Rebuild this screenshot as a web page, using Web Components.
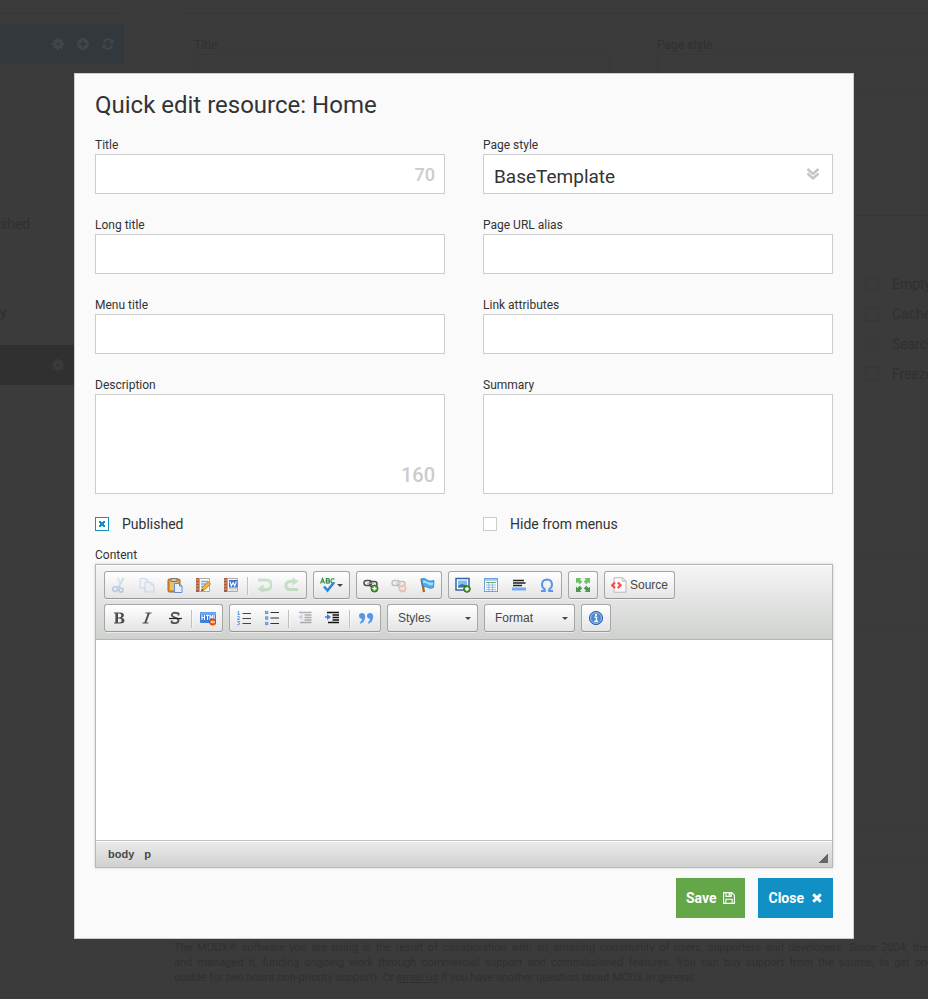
<!DOCTYPE html>
<html lang="en">
<head>
<meta charset="utf-8">
<title>Quick edit resource: Home</title>
<style>
  html, body { margin: 0; height: 100%; }
  body {
    background: #3b3b3b;
    color: #333;
    font-family: Roboto, "Liberation Sans", sans-serif;
    overflow: hidden;
  }
</style>
</head>
<body>
<dim-page></dim-page>
<modal-window heading="Quick edit resource: Home">
  <form-grid>
    <form-field label="Title" counter="70"></form-field>
    <form-field label="Page style" type="select" value="BaseTemplate"></form-field>
    <form-field label="Long title"></form-field>
    <form-field label="Page URL alias"></form-field>
    <form-field label="Menu title"></form-field>
    <form-field label="Link attributes"></form-field>
    <form-field label="Description" type="textarea" counter="160"></form-field>
    <form-field label="Summary" type="textarea"></form-field>
    <check-field label="Published" checked></check-field>
    <check-field label="Hide from menus"></check-field>
  </form-grid>
  <rich-editor label="Content"></rich-editor>
  <action-button slot="actions" label="Save" icon="floppy" tone="save"></action-button>
  <action-button slot="actions" label="Close" icon="times" tone="close"></action-button>
</modal-window>

<script>
const ICONS = {
  cut: '<g fill="none"><path d="M12.6 1 7.8 9.6" stroke="#6f94b8" stroke-width="1.8"/><path d="M7 .8 9.6 9" stroke="#9db6cf" stroke-width="1.8"/><circle cx="4.2" cy="12" r="2.4" stroke="#4d86c4" stroke-width="1.8"/><circle cx="10" cy="13.2" r="2" stroke="#4d86c4" stroke-width="1.8"/><path d="m6 10.8 2-1.4 1.4 2" stroke="#4d86c4" stroke-width="1.4"/></g>',
  copy: '<g stroke="#7c9bc9" fill="#e6eefb"><path d="M1 1.5h6l2.5 2.5v7H1z"/><path d="M7 1.5V4h2.5" fill="none"/><path d="M6 5.5h6L15 8v7H6z"/><path d="M12 5.5V8h3" fill="none"/></g>',
  paste: '<rect x="1" y="2" width="12" height="13" rx="1.3" fill="#d9952f" stroke="#a3671a"/><path d="M3 4h8v9H3z" fill="#efbe6b"/><path d="M4 1.5h6v3H4z" fill="#c8c8c8" stroke="#777"/><path d="M7.5 6.5h5l2.5 2.5v6.500h-7.500z" fill="#e4effd" stroke="#5e8fd0"/><path d="M12.500 6.500V9H15" fill="none" stroke="#5e8fd0"/>',
  template: '<path d="M1 1h3.500v14H1z" fill="#a65b43"/><path d="M1 3h3M1 6h3M1 9h3M1 12h3" stroke="#d9a08a"/><path d="M4.500 1.500h10v13h-10z" fill="#fafafa" stroke="#aaa"/><path d="M6 4.500h7M6 7h7M6 9.500h4" stroke="#8aa4d8" stroke-width="1.300"/><path d="m6.500 14 .8-3.400 6-6 2.300 2.300-6 6z" fill="#f5b431" stroke="#bd7517" stroke-width=".8"/><path d="m6.500 14 .5-2 1.500 1.500z" fill="#444"/>',
  word: '<path d="M1 1h3.500v14H1z" fill="#a65b43"/><path d="M1 3h3M1 6h3M1 9h3M1 12h3" stroke="#d9a08a"/><path d="M4.500 1.500h10v13h-10z" fill="#fafafa" stroke="#aaa"/><path d="M6 11.500h8M6 13h8" stroke="#bbb" stroke-width=".8"/><path d="M6 3h8.500v7.500H6z" fill="#3d6fd0"/><path d="M7 4.500 8.400 9l1.800-3.500L11.700 9l1.700-4.500" fill="none" stroke="#fff" stroke-width="1.100"/>',
  undo: '<path d="M2 3h8.500a4.200 4.200 0 0 1 0 9.700H6" fill="none" stroke="#62b562" stroke-width="3"/><path d="M7.500 7.500v8.300L1.500 12z" fill="#62b562"/>',
  redo: '<path d="M14 12.500H6a3.800 3.800 0 0 1 0-8.200h4" fill="none" stroke="#62b562" stroke-width="3.200"/><path d="M8.500.2v8.300l6-4.200z" fill="#62b562"/>',
  spell: '<g fill="none" stroke="#2f8a3c" stroke-width="1.100"><path d="M.6 6.500 2.600 1.500l2 5M1.300 5h2.600M6.300 6V1.600h1.800q1.300.1 1.300 1.100T8.100 3.900H6.300h2q1.400.1 1.400 1.200T8.300 6.100zM14.500 2.300q-3.200-1.800-3.500 1.600.3 3.500 3.500 1.600"/></g><path d="m4 9.500 3.500 4 6.500-8" fill="none" stroke="#2f86dc" stroke-width="2.600"/>',
  link: '<g fill="none" stroke="#4d4d4d" stroke-width="1.500"><rect x="1" y="3.500" width="7.500" height="5" rx="2.500"/><rect x="6.500" y="4.500" width="7.500" height="5" rx="2.500"/></g><path d="M4 6.200h7" stroke="#aaa"/><circle cx="11.500" cy="11.500" r="3.500" fill="#4a9c2c" stroke="#2e701a"/><path d="M11.500 9.500v4M9.500 11.500h4" stroke="#fff" stroke-width="1.400"/>',
  unlink: '<g fill="none" stroke="#4d4d4d" stroke-width="1.500"><rect x="1" y="3.500" width="7.500" height="5" rx="2.500"/><rect x="6.500" y="4.500" width="7.500" height="5" rx="2.500"/></g><path d="M4 6.200h7" stroke="#aaa"/><circle cx="11.500" cy="11.500" r="3.500" fill="#ef7a33" stroke="#c85512"/><path d="M9.500 11.500h4" stroke="#fff" stroke-width="1.500"/>',
  anchor: '<path d="m2.500 2 2.500 13" stroke="#a0641c" stroke-width="2.200"/><path d="M2 2q3-1.500 5.500.500T12 4l3-.5-.5 7q-2.500 1.500-5 .2T4.500 9.500z" fill="#49b1f3" stroke="#2a81cd" stroke-width=".8"/><path d="M4 4q2-1 4 .7T14 5.500v2Q11 9 8.500 7T4.500 6.500z" fill="#a9e0ff"/>',
  image: '<rect x="1" y="1.500" width="13" height="11.500" fill="#fff" stroke="#3465a8" stroke-width="1.500"/><path d="M3 3.500h9v7H3z" fill="#82bdf0"/><path d="M3 10.500V9l4-2 5 1.500v2z" fill="#3d6f9f"/><circle cx="12" cy="12" r="3.300" fill="#4a9c2c" stroke="#2e701a"/><path d="M12 10v4M10 12h4" stroke="#fff" stroke-width="1.400"/>',
  table: '<rect x="1.500" y="1.500" width="13" height="13" fill="#fff" stroke="#6d9ed8"/><path d="M2 2h12v2H2z" fill="#a8c9f0"/><path d="M3 5.500h10" stroke="#76a86a"/><path d="M3 8h10M3 10.300h10M3 12.600h10M5.800 6v8M9.500 6v8" stroke="#8bb2df" stroke-width=".9"/>',
  hr: '<path d="M2 3.500h11M2 6h12.500M2 8.500h9" stroke="#222" stroke-width="1.300"/><path d="M1 10.500h14v3H1z" fill="#79a8ec"/>',
  omega: '<path d="M2 14h3.800v-1.700Q3 10.500 3 7.500 3.200 2.600 8 2.500q4.800.1 5 5 0 3-2.800 4.800V14H14" fill="none" stroke="#5b94e4" stroke-width="2"/>',
  maximize: '<g fill="#6cc065"><path d="M1 1h5.500L5 2.500 7.200 4.700 4.700 7.200 2.500 5 1 6.500zM15 1v5.500L13.500 5l-2.200 2.200-2.500-2.500L11 2.500 9.500 1z"/></g><g fill="#4b9a4e"><path d="M1 15V9.500L2.500 11l2.200-2.200 2.500 2.500L5 13.500 6.500 15zM15 15H9.500l1.500-1.500-2.200-2.200 2.500-2.500L13.500 11 15 9.500z"/></g>',
  source: '<path d="M3 .8h8.500l3.500 3.200v11.200H3z" fill="#fbfbfb" stroke="#b5b5b5"/><path d="M11.300 1v3.300h3.400" fill="#e6e6e6" stroke="#b5b5b5" stroke-width=".8"/><path d="M4 5.500 1.200 8.300 4 11M6.800 5.500l2.800 2.800L6.800 11" fill="none" stroke="#ec4f46" stroke-width="2.200"/>',
  bold: '<path fill="#4d4d4d" fill-rule="evenodd" d="M3 2.500h6.200q3.700.1 3.700 2.900 0 1.900-2.200 2.400 2.800.5 2.800 2.800 0 2.900-4.200 2.900H3v-.8l1.400-.4V3.700L3 3.300zm4 1v3.900h1.300q2-.1 2-2t-2-1.900zm0 4.900v4.100h1.500q2.200-.1 2.200-2.100T8.500 8.400z"/>',
  italic: '<path d="M6.500 3h6M3.500 13h6" stroke="#4d4d4d" stroke-width="1.100"/><path d="M9.900 3 6.200 13" stroke="#4d4d4d" stroke-width="2"/>',
  strike: '<path d="M11.500 5.500V3.500Q5 1.500 4.800 5q.2 1.800 3.200 2.600 3.600.9 3.600 2.900Q11 14.300 4.700 12.500v-2" fill="none" stroke="#555" stroke-width="1.900"/><path d="M2 8.500h13" stroke="#222" stroke-width="1.200"/>',
  html: '<rect x="0" y="2" width="16" height="11" rx="1" fill="#3d7fdb"/><path d="M0 3q0-1 1-1h14q1 0 1 1v2H0z" fill="#6ba4ef"/><path d="M2 5v5M4.500 5v5M2 7.500h2.500M6 5.500h3M7.500 5.500V10M10 10V5l1.300 3L12.700 5v5M14.200 5v4.500" fill="none" stroke="#fff"/><circle cx="12.700" cy="12" r="3.200" fill="#f0661b" stroke="#c2440a" stroke-width=".8"/><path d="M10.800 12h3.800" stroke="#fff" stroke-width="1.400"/>',
  ol: '<path d="M6.500 3.500H15M6.500 8.500H15M6.500 13.500H15" stroke="#444" stroke-width="1.200"/><path d="M1.500 2 2.600 1.400V4.500M1.500 4.500h2.300M1.300 6.800q2.400-1.200 2.200.5L1.400 9.500h2.500M1.300 11.500h2.400L2.500 13q1.300 0 1.200 1t-2.500.8" fill="none" stroke="#5c96e8"/>',
  ul: '<path d="M6.500 2.500H15M6.500 8H15M6.500 13.500H15" stroke="#333" stroke-width="1.200"/><g fill="#8ab4f0" stroke="#5c90df" stroke-width=".8"><rect x="1.500" y="1.300" width="2.400" height="2.400"/><rect x="1.500" y="6.800" width="2.400" height="2.400"/><rect x="1.500" y="12.300" width="2.400" height="2.400"/></g>',
  outdent: '<path d="M2 2.500h12.500M7.500 5h7M7.500 7.500h7M7.500 10h7M3 12.500h11.500" stroke="#111" stroke-width="1.500"/><path d="M5.500 4 1.500 7l4 3z" fill="#4b8be6"/>',
  indent: '<path d="M2 2.500h12M7.500 5h6.500M7.500 7.500h6.500M7.500 10h6.500M3 12.500h11" stroke="#111" stroke-width="1.400"/><path d="m2 4 4 3-4 3zM0 6.300h3v1.500H0z" fill="#3d80e0"/>',
  quote: '<path fill="#5796ec" d="M1 5.800Q1.100 3.200 4 3.100q3.200.2 3.200 4Q6.700 12.500 2.500 13.800l-.7-1.100q2-1.500 2.200-4-2.900 0-3-2.900zM9 5.800q.1-2.600 3-2.700 3.200.2 3.200 4-.5 5.400-4.700 6.700l-.7-1.100q2-1.500 2.200-4-2.900 0-3-2.900z"/>',
  info: '<circle cx="8" cy="8" r="6.600" fill="#4f87cd" stroke="#2f5fa8"/><circle cx="8" cy="8" r="5.400" fill="none" stroke="#9bc0ec"/><circle cx="8" cy="4.900" r="1.100" fill="#fff"/><path d="M6.500 7.200h2v4M6.300 11.300h3.500" fill="none" stroke="#fff" stroke-width="1.400"/>',
  chevrons: '<path d="m2.500 3 5.500 5 5.500-5M2.500 7.500l5.500 5 5.500-5" fill="none" stroke="currentColor" stroke-width="2.400"/>',
  floppy: '<path d="M.8.8h11L15.200 4.200v11H.8z" fill="none" stroke="currentColor" stroke-width="1.500"/><path d="M4 1v4.800h7V1M3.800 15V9.700h8.400V15" fill="none" stroke="currentColor" stroke-width="1.400"/><path d="M7.500 1h2.500v4H7.500z" fill="currentColor"/>',
  times: '<path d="m3 3 10 10M13 3 3 13" fill="none" stroke="currentColor" stroke-width="4"/>',
  gear: '<circle cx="8" cy="8" r="4" fill="none" stroke="currentColor" stroke-width="4"/><path d="M8 0v3M8 13v3M0 8h3M13 8h3M2.300 2.300l2 2M11.700 11.700l2 2M13.700 2.300l-2 2M4.300 11.700l-2 2" stroke="currentColor" stroke-width="3.200"/>',
  plus: '<path fill="currentColor" fill-rule="evenodd" d="M8 0a8 8 0 1 0 0 16A8 8 0 0 0 8 0zM6.700 3.500h2.600v3.200h3.200v2.600H9.300v3.200H6.700V9.300H3.500V6.700h3.200z"/>',
  refresh: '<path d="M2 6.500Q4 1.500 8.500 1.700q3 .1 5 2.500M14 9.500Q12 14.500 7.500 14.300q-3-.1-5-2.500" fill="none" stroke="currentColor" stroke-width="2.500"/><path d="M15.500 1v6h-6zM.5 15V9h6z" fill="currentColor"/>'
};

const svg = name => `<svg viewBox="0 0 16 16" aria-hidden="true">${ICONS[name] || ''}</svg>`;

class Base extends HTMLElement {
  connectedCallback() {
    if (this.shadowRoot) return;
    this.attachShadow({ mode: 'open' }).innerHTML =
      `<style>*{box-sizing:border-box}${this.css()}</style>${this.html()}`;
  }
  attr(name) { return this.getAttribute(name) || ''; }
}

customElements.define('ui-icon', class extends Base {
  css() { return ':host{display:inline-block;width:16px;height:16px;flex:none}svg{display:block;width:100%;height:100%}'; }
  html() { return svg(this.attr('name')); }
});

customElements.define('dim-page', class extends Base {
  css() { return `
    :host{display:grid;grid-template-columns:124px minmax(0,1fr);column-gap:60px;height:100vh;overflow:hidden;color:#303030;font-size:12px;line-height:15px}
    aside,main{display:flex;flex-direction:column;min-width:0}
    .rule{height:14px;border-bottom:1px solid #373737;flex:none}
    .bar{display:flex;align-items:center;justify-content:flex-end;gap:13px;height:40px;padding-right:10px;flex:none}
    .bar ui-icon{width:12px;height:12px}
    .tools{margin-top:10px;background:#33383c;color:#41464a}
    .node{font-size:14px;line-height:20px}
    .first{margin-top:150px}.second{margin-top:68px}
    .active{margin-top:23px;background:#303030;color:#3b3b3b;padding-right:60px}
    .fields{display:grid;grid-template-columns:416px 416px;column-gap:47px;padding:24px 0 0 10px}
    .box{height:40px;margin-top:1px;border:1px solid #383838}
    .line{border-top:1px solid #373737;margin-top:121px}
    .checks{margin:53px 0 0 681px;display:grid;grid-auto-rows:30px;align-items:center;font-size:14px}
    .checks span{display:flex;align-items:center;gap:13px;white-space:nowrap}
    .checks i{width:14px;height:14px;border:1px solid #373737;flex:none}
    .panel{margin-left:660px;border:solid #383838;border-width:1px 0}
    .a{height:76px;margin-top:166px}.b{height:30px;margin-top:198px}
    footer{width:768px;margin:81px 0 0 -10px;font-size:11px}
    p{margin:0;text-align-last:justify;white-space:nowrap}p.end{text-align-last:left}
    a{color:inherit}`; }
  html() { return `
    <aside><div class="rule"></div>
      <div class="bar tools"><ui-icon name="gear"></ui-icon><ui-icon name="plus"></ui-icon><ui-icon name="refresh"></ui-icon></div>
      <div class="node first">shed</div><div class="node second">y</div>
      <div class="bar active"><ui-icon name="gear"></ui-icon></div></aside>
    <main><div class="rule"></div>
      <div class="fields"><div>Title<div class="box"></div></div><div>Page style<div class="box"></div></div></div>
      <div class="line"></div>
      <div class="checks"><span><i></i>Empty</span><span><i></i>Cache</span><span><i></i>Search</span><span><i></i>Freeze</span></div>
      <div class="panel a"></div><div class="panel b"></div>
      <footer>
        <p>The MODX® software you are using is the result of collaboration with an amazing community of users, supporters and developers. Since 2004, the te</p>
        <p>and managed it, funding ongoing work through commercial support and commissioned features. You can buy support from the source, to get one t</p>
        <p class="end">usable for two hours non-priority support). Or <a href="#">email us</a> if you have another question about MODX in general.</p>
      </footer></main>`; }
});

customElements.define('modal-window', class extends Base {
  css() { return `
    :host{position:fixed;inset:0;display:block;overflow:auto;padding:73px 74px 60px;box-sizing:border-box}
    section{background:#fafafa;border:1px solid #ccc;padding:15px 20px 20px}
    h1{margin:0 0 17px;font-size:24px;line-height:32px;font-weight:400}
    footer{display:flex;justify-content:flex-end;gap:13px;margin-top:10px}`; }
  html() { return `<section role="dialog" aria-labelledby="h"><h1 id="h">${this.attr('heading')}</h1><slot></slot><footer><slot name="actions"></slot></footer></section>`; }
});

customElements.define('form-grid', class extends Base {
  css() { return ':host{display:grid;grid-template-columns:repeat(2,minmax(0,1fr));column-gap:38px;row-gap:24px}::slotted(check-field){margin-top:-4px}'; }
  html() { return '<slot></slot>'; }
});

customElements.define('form-field', class extends Base {
  css() { return `
    :host{display:block}
    label{display:block;font-size:12px;line-height:14px;padding-bottom:2px}
    .wrap{position:relative}
    input,select,textarea{display:block;width:100%;height:40px;margin:0;padding:0 10px;border:1px solid #ccc;border-radius:0;background:#fff;color:#333;font:19px/24px Roboto,sans-serif;appearance:none;outline:0;resize:none}
    select{padding:6px 10px 0}
    textarea{height:100px;padding:8px 10px}
    output{position:absolute;right:10px;bottom:7px;color:#ccc;font-size:18px;line-height:24px;font-weight:500;pointer-events:none}
    output.big{font-size:20px}
    ui-icon{position:absolute;right:12px;top:12px;color:#c4c4c4;pointer-events:none}`; }
  html() {
    const t = this.attr('type'), c = this.attr('counter');
    const control = t === 'select'
      ? `<select id="f"><option>${this.attr('value')}</option></select><ui-icon name="chevrons"></ui-icon>`
      : t === 'textarea' ? '<textarea id="f"></textarea>' : '<input id="f" type="text">';
    return `<label for="f">${this.attr('label')}</label><div class="wrap">${control}${c ? `<output for="f" class="${t ? 'big' : ''}">${c}</output>` : ''}</div>`;
  }
});

customElements.define('check-field', class extends Base {
  css() { return `
    :host{display:block}
    label{display:flex;align-items:center;gap:13px;font-size:14px;line-height:20px}
    input{appearance:none;display:grid;place-items:center;width:14px;height:14px;margin:0;border:1px solid #ccc;background:#fff;flex:none}
    input:checked{border-color:#1190c6}
    input:checked::after{content:"";width:6px;height:6px;background:linear-gradient(45deg,transparent 38%,#1190c6 38% 62%,transparent 62%),linear-gradient(-45deg,transparent 38%,#1190c6 38% 62%,transparent 62%)}`; }
  html() { return `<label><input type="checkbox" ${this.hasAttribute('checked') ? 'checked' : ''}>${this.attr('label')}</label>`; }
});

customElements.define('tool-group', class extends Base {
  css() { return ':host{display:flex;height:28px;box-sizing:border-box;border:1px solid #a6a6a6;border-bottom-color:#979797;border-radius:3px;background:linear-gradient(#fff,#e4e4e4);box-shadow:0 1px 0 rgba(255,255,255,.5),inset 0 0 2px rgba(255,255,255,.15)}'; }
  html() { return '<slot></slot>'; }
});

customElements.define('tool-sep', class extends Base {
  css() { return ':host{display:block;width:1px;height:18px;margin:5px 2px 0;background:#c0c0c0;box-shadow:1px 0 1px rgba(255,255,255,.5)}'; }
  html() { return ''; }
});

customElements.define('tool-button', class extends Base {
  css() { return `
    :host{display:block}
    button{display:flex;align-items:center;height:26px;margin:0;padding:0 6px;border:0;background:none;color:#474747;font:12px/16px "Liberation Sans",Arial,sans-serif}
    button:disabled ui-icon{opacity:.3}
    span{margin-left:3px}
    .arrow{margin-left:1px;border:solid transparent;border-width:3px 3px 0;border-top-color:#474747;width:6px;flex:none}`; }
  html() {
    const l = this.attr('label'), d = this.hasAttribute('drop');
    return `<button type="button" aria-label="${l || this.attr('name')}" ${this.hasAttribute('off') ? 'disabled' : ''}><ui-icon name="${this.attr('icon')}"></ui-icon>${l ? `<span>${l}</span>` : ''}${d ? '<i class="arrow"></i>' : ''}</button>`;
  }
});

customElements.define('tool-select', class extends Base {
  css() { return `
    :host{position:relative;display:block;width:89px}
    select{appearance:none;display:block;width:100%;height:26px;margin:0;padding:0 20px 0 10px;border:0;background:none;color:#474747;font:12px/26px "Liberation Sans",Arial,sans-serif}
    i{position:absolute;right:6px;top:12px;border:solid transparent;border-width:3px 3px 0;border-top-color:#474747;pointer-events:none}`; }
  html() { return `<select aria-label="${this.attr('label')}"><option>${this.attr('label')}</option></select><i></i>`; }
});

customElements.define('rich-editor', class extends Base {
  css() { return `
    :host{display:block;margin-top:13px}
    label{display:block;font-size:12px;line-height:16px;margin-bottom:1px}
    .frame{border:1px solid #b6b6b6;background:#fff;box-shadow:0 0 3px rgba(0,0,0,.15)}
    .top{display:grid;row-gap:5px;padding:6px 8px 7px;border-bottom:1px solid #b6b6b6;background:linear-gradient(#f5f5f5,#cfd1cf);box-shadow:inset 0 1px 0 #fff}
    .row{display:flex;flex-wrap:wrap;gap:6px}
    textarea{display:block;width:100%;height:200px;margin:0;padding:10px;border:0;outline:0;resize:none;background:#fff;font:13px/20px "Liberation Sans",Arial,sans-serif}
    .bottom{display:flex;justify-content:space-between;height:27px;padding:0 4px 0 8px;border-top:1px solid #bfbfbf;background:linear-gradient(#ebebeb,#cfd1cf);box-shadow:inset 0 1px 0 #fff}
    nav{display:flex;align-items:center;gap:2px}
    a{padding:0 4px;color:#484848;text-decoration:none;font:bold 11px/16px "Liberation Sans",Arial,sans-serif}
    .grip{align-self:flex-end;width:10px;height:10px;margin-bottom:4px;background:linear-gradient(135deg,transparent 50%,#666 50%)}`; }
  html() { return `
    <label for="c">${this.attr('label')}</label>
    <div class="frame">
      <div class="top" role="toolbar">
        <div class="row">
          <tool-group><tool-button name="Cut" icon="cut" off></tool-button><tool-button name="Copy" icon="copy" off></tool-button><tool-button name="Paste" icon="paste"></tool-button><tool-button name="Paste as plain text" icon="template"></tool-button><tool-button name="Paste from Word" icon="word"></tool-button><tool-sep></tool-sep><tool-button name="Undo" icon="undo" off></tool-button><tool-button name="Redo" icon="redo" off></tool-button></tool-group>
          <tool-group><tool-button name="Spell check" icon="spell" drop></tool-button></tool-group>
          <tool-group><tool-button name="Link" icon="link"></tool-button><tool-button name="Unlink" icon="unlink" off></tool-button><tool-button name="Anchor" icon="anchor"></tool-button></tool-group>
          <tool-group><tool-button name="Image" icon="image"></tool-button><tool-button name="Table" icon="table"></tool-button><tool-button name="Horizontal line" icon="hr"></tool-button><tool-button name="Special character" icon="omega"></tool-button></tool-group>
          <tool-group><tool-button name="Maximize" icon="maximize"></tool-button></tool-group>
          <tool-group><tool-button label="Source" icon="source"></tool-button></tool-group>
        </div>
        <div class="row">
          <tool-group><tool-button name="Bold" icon="bold"></tool-button><tool-button name="Italic" icon="italic"></tool-button><tool-button name="Strikethrough" icon="strike"></tool-button><tool-sep></tool-sep><tool-button name="Remove format" icon="html"></tool-button></tool-group>
          <tool-group><tool-button name="Numbered list" icon="ol"></tool-button><tool-button name="Bulleted list" icon="ul"></tool-button><tool-sep></tool-sep><tool-button name="Outdent" icon="outdent" off></tool-button><tool-button name="Indent" icon="indent"></tool-button><tool-sep></tool-sep><tool-button name="Quote" icon="quote"></tool-button></tool-group>
          <tool-group><tool-select label="Styles"></tool-select></tool-group>
          <tool-group><tool-select label="Format"></tool-select></tool-group>
          <tool-group><tool-button name="About" icon="info"></tool-button></tool-group>
        </div>
      </div>
      <textarea id="c"></textarea>
      <div class="bottom"><nav><a href="#">body</a><a href="#">p</a></nav><i class="grip"></i></div>
    </div>`; }
});

customElements.define('action-button', class extends Base {
  css() { return `
    :host{display:block}
    button{display:flex;align-items:center;gap:7px;height:40px;margin:0;padding:0 10px;border:0;color:#fff;background:#63a748;font:700 14px/20px Roboto,sans-serif}
    button.close{background:#1190c6}
    ui-icon{width:12px;height:12px}`; }
  html() { return `<button type="button" class="${this.attr('tone')}">${this.attr('label')}<ui-icon name="${this.attr('icon')}"></ui-icon></button>`; }
});
</script>
</body>
</html>
